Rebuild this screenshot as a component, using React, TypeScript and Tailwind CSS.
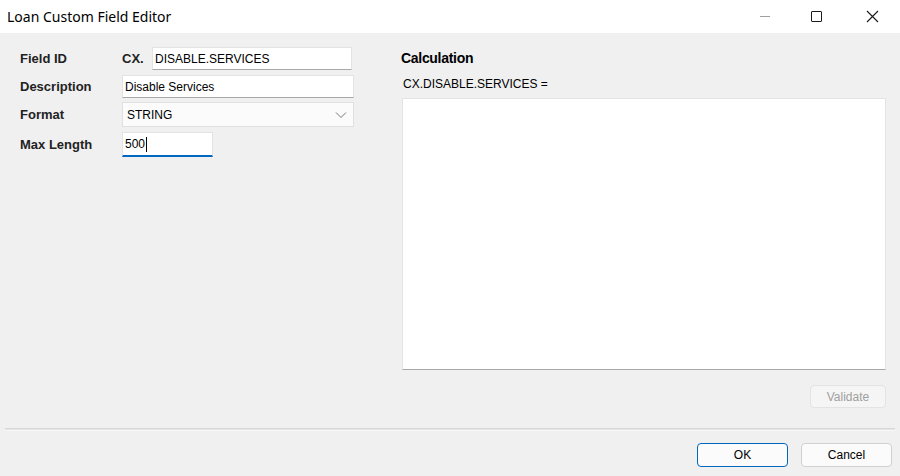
import React from "react";

export default function App() {
  return (
    <div className="w-[900px] h-[476px] bg-[#f0f0f0] flex flex-col overflow-hidden" style={{ fontFamily: '"Liberation Sans", Arial, sans-serif' }}>
      {/* Title bar */}
      <div className="h-[33px] bg-white flex items-center shrink-0">
        <div className="pl-[7px] text-[14px] text-black flex-1" style={{ fontFamily: '"Noto Sans", sans-serif' }}>Loan Custom Field Editor</div>
        <div className="flex items-center h-full">
          <div className="w-[46px] h-full flex items-center justify-center">
            <div className="w-[10px] h-px bg-[#a0a0a0]" />
          </div>
          <div className="w-[56px] h-full flex items-center justify-center">
            <div className="w-[11px] h-[11px] border border-[#1a1a1a] rounded-[1px]" />
          </div>
          <div className="w-[56px] h-full flex items-center justify-center">
            <svg width="13" height="13" viewBox="0 0 13 13"><path d="M1 1L12 12M12 1L1 12" stroke="#1a1a1a" strokeWidth="1.1" /></svg>
          </div>
        </div>
      </div>

      {/* Body */}
      <div className="flex flex-1 min-h-0">
        {/* Left form */}
        <div className="w-[400px] pl-[20px] pt-[14px] flex flex-col">
          <div className="flex items-center h-[23px]">
            <div className="w-[102px] text-[13px] font-bold text-[#222]">Field ID</div>
            <div className="w-[30px] text-[13px] font-bold text-[#222]">CX.</div>
            <div className="w-[200px] h-[23px] bg-white border border-[#e3e3e3] border-b-[#a8a8a8] flex items-center px-[2px] text-[12px] text-black">DISABLE.SERVICES</div>
          </div>
          <div className="flex items-center h-[23px] mt-[5px]">
            <div className="w-[102px] text-[13px] font-bold text-[#222]">Description</div>
            <div className="w-[232px] h-[23px] bg-white border border-[#e3e3e3] border-b-[#a8a8a8] flex items-center px-[2px] text-[12px] text-black">Disable Services</div>
          </div>
          <div className="flex items-center h-[25px] mt-[4px]">
            <div className="w-[102px] text-[13px] font-bold text-[#222]">Format</div>
            <div className="w-[232px] h-[25px] bg-[#fbfbfb] border border-[#e0e0e0] flex items-center pl-[4px] pr-[6px] text-[12px] text-black justify-between">
              <span>STRING</span>
              <svg width="12" height="8" viewBox="0 0 12 8"><path d="M1 1.5L6 6.5L11 1.5" stroke="#777" strokeWidth="1" fill="none" /></svg>
            </div>
          </div>
          <div className="flex items-center h-[25px] mt-[5px]">
            <div className="w-[102px] text-[13px] font-bold text-[#222]">Max Length</div>
            <div className="w-[91px] h-[25px] bg-white border border-[#e3e3e3] border-b-2 border-b-[#0067c0] flex items-center px-[2px] text-[12px] text-black">
              500<span className="inline-block w-px h-[15px] bg-black ml-px" />
            </div>
          </div>
        </div>

        {/* Right calculation */}
        <div className="flex-1 pl-[1px] pr-[14px] pt-[16px] flex flex-col">
          <div className="text-[14px] font-bold text-black tracking-[-0.3px] leading-[18px]">Calculation</div>
          <div className="text-[12px] text-black mt-[10px] pl-[2px] leading-[14px]">CX.DISABLE.SERVICES =</div>
          <div className="mt-[7px] ml-[1px] h-[272px] bg-white border border-[#e3e3e3] border-b-[#a8a8a8]" />
          <div className="flex justify-end mt-[15px]">
            <div className="w-[76px] h-[23px] border border-[#e3e3e3] rounded-[4px] bg-[#f5f5f5] flex items-center justify-center text-[12px] text-[#a0a0a0]">Validate</div>
          </div>
        </div>
      </div>

      {/* Footer */}
      <div className="shrink-0 px-[5px]">
        <div className="h-[3px] bg-[#e4e4e4] border-t border-[#d8d8d8] border-b border-b-[#f8f8f8]" />
        <div className="flex justify-end gap-[13px] pt-[12px] pb-[9px] pr-[3px]">
          <div className="w-[91px] h-[24px] border border-[#0067c0] rounded-[4px] bg-[#fbfbfb] flex items-center justify-center text-[12px] text-black">OK</div>
          <div className="w-[91px] h-[24px] border border-[#d0d0d0] rounded-[4px] bg-[#fbfbfb] flex items-center justify-center text-[12px] text-black">Cancel</div>
        </div>
      </div>
    </div>
  );
}
